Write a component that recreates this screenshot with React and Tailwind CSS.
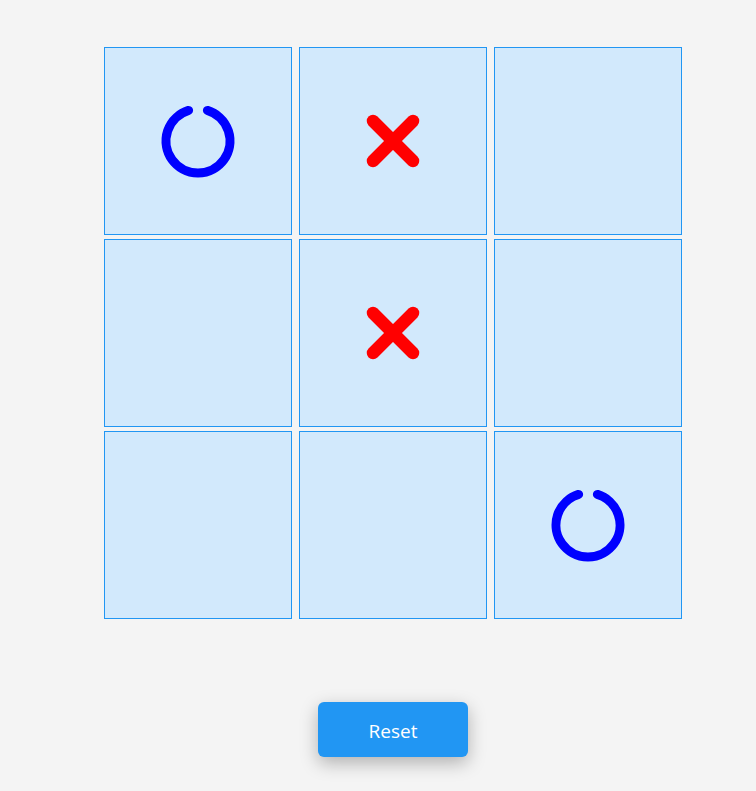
import React, { useState } from "react";

function Nought() {
  return (
    <svg width="80" height="80" viewBox="0 0 80 80">
      <path
        d="M49.4 9.4 A32 32 0 1 1 30.6 9.4"
        fill="none"
        stroke="#0000ff"
        strokeWidth="9"
        strokeLinecap="round"
      />
    </svg>
  );
}

function Cross() {
  return (
    <svg width="60" height="60" viewBox="0 0 60 60">
      <g stroke="#ff0000" strokeWidth="12.5" strokeLinecap="round">
        <line x1="10" y1="10" x2="50" y2="50" />
        <line x1="50" y1="10" x2="10" y2="50" />
      </g>
    </svg>
  );
}

const START = ["O", "X", null, null, "X", null, null, null, "O"];

export default function App() {
  const [board, setBoard] = useState(START);

  return (
    <div
      className="min-h-[791px] bg-[#f4f4f4] pt-[47px]"
      style={{ fontFamily: '"Open Sans", "Noto Sans", sans-serif' }}
    >
      <div className="ml-[104px] grid w-[578px] grid-cols-[188px_188px_188px] gap-x-[7px] gap-y-[4px]">
        {board.map((cell, i) => (
          <div
            key={i}
            className="flex h-[188px] items-center justify-center border border-[#2196f3] bg-[#d2e9fc]"
          >
            {cell === "O" && <Nought />}
            {cell === "X" && <Cross />}
          </div>
        ))}
      </div>

      <div className="ml-[318px] mt-[83px]">
        <button
          onClick={() => setBoard(Array(9).fill(null))}
          className="h-[55px] w-[150px] rounded-md bg-[#2196f3] pt-[3px] text-[19px] font-medium text-white shadow-[0_6px_18px_rgba(0,0,0,0.28)]"
        >
          Reset
        </button>
      </div>
    </div>
  );
}
